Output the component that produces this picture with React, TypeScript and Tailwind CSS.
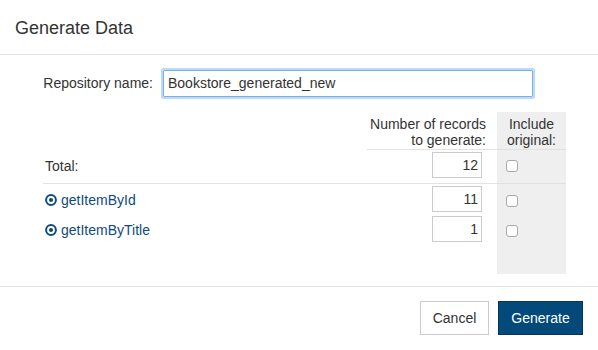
import React from "react";

const TargetIcon = () => (
  <svg width="12" height="12" viewBox="0 0 12 12" className="shrink-0">
    <circle cx="6" cy="6" r="4.9" fill="none" stroke="#0f4c7a" strokeWidth="2" />
    <circle cx="6" cy="6" r="2.1" fill="#0f4c7a" />
  </svg>
);

const Check = () => (
  <span className="block w-[12px] h-[12px] rounded-[3px] border border-[#a9a9a9] bg-white" />
);

const NumBox = ({ v }: { v: string }) => (
  <div className="w-[50px] h-[26px] border border-[#cccccc] bg-white text-right pr-[3px] leading-[24px] text-[14px] text-[#333]">
    {v}
  </div>
);

export default function App() {
  const rows = [
    { name: "getItemById", v: "11" },
    { name: "getItemByTitle", v: "1" },
  ];
  return (
    <div
      className="w-[598px] h-[350px] bg-white text-[#333] text-[14px] overflow-hidden"
      style={{ fontFamily: '"Liberation Sans", Arial, sans-serif' }}
    >
      <div className="h-[55px] border-b border-[#e5e5e5] px-[15px] flex items-center">
        <span className="text-[18px] leading-[20px] pt-[2px]">Generate Data</span>
      </div>
      <div className="pl-[43px] pt-[15px] pb-[12px] h-[231px]">
        <div className="flex items-center h-[27px]">
          <span className="w-[110px] text-right">Repository name:</span>
          <div className="ml-[10px] w-[370px] h-[27px] border border-[#79b0e6] shadow-[0_0_0_2px_#bcd9f5] rounded-[1px] pl-[4px] leading-[25px]">
            Bookstore_generated_new
          </div>
        </div>
        <div className="mt-[15px] grid grid-cols-[324px_130px_69px]">
          <div className="h-[37px]" />
          <div className="h-[38px] border-b border-[#e3e3e3] text-right pr-[11px] pt-[4px] leading-[16px]">
            Number of records
            <br />
            to generate:
          </div>
          <div className="h-[38px] border-b border-[#e0e0e0] bg-[#efefef] text-center pt-[4px] leading-[16px]">
            Include
            <br />
            original:
          </div>
          <div className="h-[34px] border-b border-[#e3e3e3] flex items-center pl-[2px] pb-[1px]">Total:</div>
          <div className="h-[34px] border-b border-[#e3e3e3] flex justify-end pr-[15px] pt-[2px]">
            <NumBox v="12" />
          </div>
          <div className="h-[34px] border-b border-[#e0e0e0] bg-[#efefef] pl-[9px] pt-[10px]">
            <Check />
          </div>
          {rows.map((r) => (
            <React.Fragment key={r.name}>
              <div className="h-[30px] flex items-center pl-[2px] gap-[4px] text-[#0f4c7a] pt-[2px]">
                <TargetIcon />
                <span>{r.name}</span>
              </div>
              <div className="h-[30px] flex justify-end pr-[15px] pt-[2px]">
                <NumBox v={r.v} />
              </div>
              <div className="h-[30px] bg-[#efefef] pl-[9px] pt-[11px]">
                <Check />
              </div>
            </React.Fragment>
          ))}
          <div className="h-[30px]" />
          <div className="h-[30px]" />
          <div className="h-[30px] bg-[#efefef]" />
        </div>
      </div>
      <div className="border-t border-[#e5e5e5] flex justify-end gap-[9px] pr-[15px] pt-[14px]">
        <button className="w-[69px] h-[34px] border border-[#cccccc] bg-white text-[#333] text-[14px]">
          Cancel
        </button>
        <button className="w-[85px] h-[34px] border border-[#01375c] bg-[#034a7b] text-white text-[14px]">
          Generate
        </button>
      </div>
    </div>
  );
}
